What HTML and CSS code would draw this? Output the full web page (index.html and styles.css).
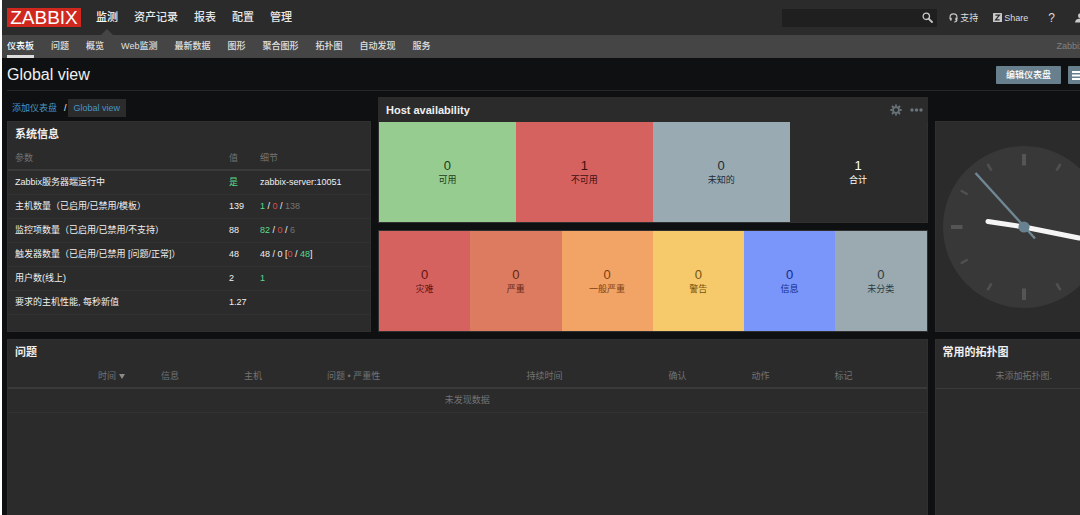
FILE: index.html
```html
<!DOCTYPE html>
<html lang="zh-CN">
<head>
<meta charset="utf-8">
<title>Global view</title>
<link rel="stylesheet" href="styles.css">
</head>
<body>
<div class="page">
  <header class="top-bar">
    <a class="logo" href="#">ZABBIX</a>
    <nav class="main-nav">
      <a class="current" href="#">监测</a>
      <a href="#">资产记录</a>
      <a href="#">报表</a>
      <a href="#">配置</a>
      <a href="#">管理</a>
    </nav>
    <form class="search">
      <input type="text" aria-label="搜索">
      <button type="button" aria-label="搜索">
        <svg width="11" height="11" viewBox="0 0 11 11" fill="none" stroke="#c8c8c8"><circle cx="4.3" cy="4.3" r="3.2" stroke-width="1.3"/><path d="M6.8 6.8 10 10" stroke-width="1.8" stroke-linecap="round"/></svg>
      </button>
    </form>
    <div class="user-links">
      <a class="support" href="#"><svg width="9" height="10" viewBox="0 0 9 10" fill="none" stroke="#c8c8c8"><path d="M1 6V4.4a3.5 3.5 0 0 1 7 0V6M8 6.6c0 1.6-1 2.4-2.8 2.4" stroke-width="1.1"/><path d="M1.8 4.8v2.6M7.2 4.8v2.6" stroke-width="1.8"/></svg>支持</a>
      <a class="share" href="#"><svg width="9" height="9" viewBox="0 0 9 9"><rect width="9" height="9" rx="0.5" fill="#c8c8c8"/><path d="M2.4 2.2h4L2.6 6.8h4" fill="none" stroke="#2b2b2b" stroke-width="1.2"/></svg>Share</a>
      <a class="help" href="#">?</a>
      <a href="#" aria-label="用户"><svg width="11" height="10" viewBox="0 0 11 10" fill="#c8c8c8"><circle cx="5.5" cy="2.7" r="2.5"/><path d="M0 9.5C0 7 2 6 4 5.7h3C9 6 11 7 11 9.5z"/></svg></a>
      <a href="#" aria-label="退出"><svg width="10" height="10" viewBox="0 0 10 10" fill="none" stroke="#c8c8c8" stroke-width="1.3"><path d="M3 2a4 4 0 1 0 4 0M5 0v5"/></svg></a>
    </div>
  </header>
  <nav class="sub-nav">
    <a class="current" href="#">仪表板</a>
    <a href="#">问题</a>
    <a href="#">概览</a>
    <a href="#">Web监测</a>
    <a href="#">最新数据</a>
    <a href="#">图形</a>
    <a href="#">聚合图形</a>
    <a href="#">拓扑图</a>
    <a href="#">自动发现</a>
    <a href="#">服务</a>
    <a class="server-name" href="#">Zabbix docker</a>
  </nav>
  <main class="content">
    <div class="title-bar">
      <h1>Global view</h1>
      <button class="btn" type="button">编辑仪表盘</button>
      <button class="btn btn-icon" type="button" aria-label="菜单"><svg width="11" height="9" viewBox="0 0 11 9" stroke="#fff" stroke-width="1.8"><path d="M0 1h11M0 4.5h11M0 8h11"/></svg></button>
      <button class="btn btn-icon" type="button" aria-label="全屏"><svg width="11" height="9" viewBox="0 0 11 9" fill="none" stroke="#fff" stroke-width="1.4"><path d="M2 3V1h2M7 1h2v2M9 6v2H7M4 8H2V6"/></svg></button>
    </div>
    <div class="breadcrumb">
      <a href="#">添加仪表盘</a><span>/</span><a class="chip" href="#">Global view</a>
    </div>
    <div class="dashboard">
      <section class="widget system">
        <h2>系统信息</h2>
        <table>
          <colgroup><col><col class="col-value"><col class="col-detail"></colgroup>
          <thead><tr><th>参数</th><th>值</th><th>细节</th></tr></thead>
          <tbody>
            <tr><td>Zabbix服务器端运行中</td><td class="green">是</td><td>zabbix-server:10051</td></tr>
            <tr><td>主机数量（已启用/已禁用/模板）</td><td>139</td><td><span class="green">1</span> / <span class="red">0</span> / <span class="grey">138</span></td></tr>
            <tr><td>监控项数量（已启用/已禁用/不支持）</td><td>88</td><td><span class="green">82</span> / <span class="red">0</span> / <span class="grey">6</span></td></tr>
            <tr><td>触发器数量（已启用/已禁用 [问题/正常]）</td><td>48</td><td>48 / 0 [<span class="red">0</span> / <span class="green">48</span>]</td></tr>
            <tr><td>用户数(线上)</td><td>2</td><td class="green">1</td></tr>
            <tr><td>要求的主机性能, 每秒新值</td><td>1.27</td><td></td></tr>
          </tbody>
        </table>
      </section>

      <section class="widget hosts">
        <div class="widget-head">
          <h2>Host availability</h2>
          <button type="button" aria-label="设置"><svg width="12" height="12" viewBox="-6 -6 12 12" fill="none" stroke="#68747a"><circle r="2.9" stroke-width="1.7"/><path d="M0-3.5V-5.6M0 3.5V5.6M-3.5 0H-5.6M3.5 0H5.6M-2.5-2.5-4-4M2.5-2.5 4-4M-2.5 2.5-4 4M2.5 2.5 4 4" stroke-width="1.8"/></svg></button>
          <button type="button" aria-label="更多"><svg width="13" height="4" viewBox="0 0 13 4" fill="#68747a"><circle cx="2" cy="2" r="1.7"/><circle cx="6.5" cy="2" r="1.7"/><circle cx="11" cy="2" r="1.7"/></svg></button>
        </div>
        <div class="tiles">
          <div class="tile available"><b>0</b><span>可用</span></div>
          <div class="tile unavailable"><b>1</b><span>不可用</span></div>
          <div class="tile unknown"><b>0</b><span>未知的</span></div>
          <div class="tile total"><b>1</b><span>合计</span></div>
        </div>
      </section>

      <section class="widget severity">
        <div class="tiles">
          <div class="tile disaster"><b>0</b><span>灾难</span></div>
          <div class="tile high"><b>0</b><span>严重</span></div>
          <div class="tile average"><b>0</b><span>一般严重</span></div>
          <div class="tile warning"><b>0</b><span>警告</span></div>
          <div class="tile info"><b>0</b><span>信息</span></div>
          <div class="tile unclassified"><b>0</b><span>未分类</span></div>
        </div>
      </section>

      <section class="widget clock">
        <svg width="162" height="162" viewBox="-81 -81 162 162">
          <circle r="81" fill="#383838"/>
          <g stroke="#555" stroke-width="4"><path d="M0-73V-61.5M0 73V61.5M-73 0H-61.5M73 0H61.5"/></g>
          <g stroke="#505050" stroke-width="2.6"><path d="M-36.5-63.2-32.5-56.3M-63.2-36.5-56.3-32.5M36.5-63.2 32.5-56.3M63.2-36.5 56.3-32.5M-36.5 63.2-32.5 56.3M-63.2 36.5-56.3 32.5M36.5 63.2 32.5 56.3M63.2 36.5 56.3 32.5"/></g>
          <g stroke="#f5f5f5" stroke-width="5" stroke-linecap="round"><path d="M0 0-36-5.5M0 0 55 11"/></g>
          <path d="M-48.5-54 11 11.5" stroke="#708794" stroke-width="2.4"/>
          <circle r="5.6" fill="#688190"/>
        </svg>
      </section>

      <section class="widget problems">
        <h2>问题</h2>
        <table>
          <colgroup><col class="col-time"><col class="col-short"><col class="col-short"><col><col class="col-duration"><col class="col-short"><col class="col-short"><col class="col-tags"></colgroup>
          <thead><tr><th class="time">时间 <svg width="6" height="5" viewBox="0 0 6 5"><path d="M0 0h6L3 5z" fill="#8a8a8a"/></svg></th><th>信息</th><th>主机</th><th>问题 • 严重性</th><th>持续时间</th><th>确认</th><th>动作</th><th>标记</th></tr></thead>
          <tbody><tr><td class="empty" colspan="8">未发现数据</td></tr></tbody>
        </table>
      </section>

      <section class="widget maps">
        <h2>常用的拓扑图</h2>
        <p>未添加拓扑图.</p>
      </section>
    </div>
  </main>
</div>
</body>
</html>
```
FILE: styles.css
```css
* { box-sizing: border-box; }

html { height: 100%; }

body {
  height: 100%;
  margin: 0;
  overflow: hidden;
  border-left: 2px solid #fff;
  background: #0e1012;
  color: #f0f0f0;
  font: 9px/12px "Liberation Sans", "Noto Sans CJK SC", sans-serif;
}

a { color: inherit; text-decoration: none; }
h1, h2, p { margin: 0; }
svg { display: block; }
button { border: 0; padding: 0; background: none; font: inherit; color: inherit; }

/* The working area is slightly wider than the window */
.page {
  display: flex;
  flex-direction: column;
  width: calc(100% + 40px);
  min-height: 100%;
}

.top-bar {
  display: flex;
  align-items: center;
  height: 35px;
  padding: 0 7px 0 5px;
  background: #2b2b2b;
}

.logo {
  width: 74px;
  background: #d0281f;
  color: #fff;
  font-size: 19px;
  line-height: 19px;
  text-align: center;
}

.main-nav {
  display: flex;
  gap: 16px;
  margin-left: 15px;
  color: #e8e8e8;
  font-size: 11px;
  font-weight: 500;
  line-height: 35px;
}

.main-nav .current { position: relative; color: #fff; }

.main-nav .current::after {
  content: "";
  position: absolute;
  bottom: 0;
  left: 50%;
  margin-left: -6px;
  border: 6px solid transparent;
  border-top: 0;
  border-bottom-color: #454545;
}

.search {
  display: flex;
  align-items: center;
  width: 155px;
  height: 18px;
  margin-left: auto;
  padding-right: 4px;
  background: #1f1f1f;
}

.search input {
  flex: 1;
  min-width: 0;
  height: 100%;
  border: 0;
  background: none;
  color: #f0f0f0;
  font: inherit;
}

.user-links {
  display: flex;
  align-items: center;
  margin-left: 12px;
  color: #ddd;
}

.user-links a { display: flex; align-items: center; gap: 2px; margin-right: 15px; }
.user-links .share { margin-right: 20px; }
.user-links .help { margin-right: 20px; font-size: 12px; }
.user-links a:last-child { margin: 0 2px 0 0; }

.sub-nav {
  display: flex;
  gap: 17px;
  height: 23px;
  padding: 0 7px 0 5px;
  background: #454545;
  color: #e0e0e0;
  font-weight: 500;
  line-height: 23px;
}

.sub-nav .current { border-bottom: 3px solid #ddd; color: #fff; }
.sub-nav .server-name { margin-left: auto; color: #808080; font-weight: 400; }

.content {
  display: flex;
  flex: 1;
  flex-direction: column;
  padding: 0 7px 0 5px;
}

.title-bar {
  display: flex;
  align-items: center;
  gap: 7px;
  height: 33px;
  padding-top: 2px;
  border-bottom: 1px solid #252729;
}

.title-bar h1 { flex: 1; font-size: 16px; font-weight: 400; line-height: 20px; }

.btn {
  height: 18px;
  padding: 0 10px;
  border-radius: 1px;
  background: #68808e;
  color: #fff;
  font-weight: 500;
}

.btn-icon { padding: 0 4px; }

.breadcrumb {
  display: flex;
  align-items: center;
  height: 30px;
  padding: 3px 5px 0;
  color: #f0f0f0;
}

.breadcrumb a { color: #4796c4; }
.breadcrumb span { margin: 0 1px 0 7px; }
.breadcrumb .chip { padding: 3px 6px; background: #2b2b2b; line-height: 12px; }

.dashboard {
  display: grid;
  flex: 1;
  grid-template-columns: repeat(12, 1fr);
  grid-template-rows: 102px 102px minmax(176px, 1fr);
  gap: 7px;
}

.widget {
  position: relative;
  min-width: 0;
  border: 1px solid #303030;
  background: #2b2b2b;
}

.system { grid-column: span 4; grid-row: span 2; }
.hosts { grid-column: 5 / span 6; grid-row: 1; }
.severity { grid-column: 5 / span 6; grid-row: 2; }
.clock { display: grid; grid-column: 11 / span 2; grid-row: 1 / span 2; place-items: center; }
.problems { grid-column: 1 / span 10; border-bottom: 0; }
.maps { grid-column: 11 / span 2; border-bottom: 0; }

.widget h2 { padding-left: 7px; font-size: 11px; line-height: 24px; }

/* Header revealed above the widget while it is active */
.widget-head {
  position: absolute;
  right: -1px;
  bottom: 100%;
  left: -1px;
  display: flex;
  align-items: center;
  gap: 8px;
  height: 25px;
  padding: 0 5px 0 1px;
  background: #2b2b2b;
}

.widget-head h2 { flex: 1; }

table { width: 100%; border-collapse: collapse; table-layout: fixed; }
th, td { height: 24px; padding: 0 0 0 7px; text-align: left; white-space: nowrap; }
th { border-bottom: 2px solid #3a3a3a; color: #737373; font-weight: 400; }
td { border-bottom: 1px solid #323232; }

.col-value { width: 31px; }
.col-detail { width: 117px; }
.col-time { width: 146px; }
.col-short { width: 83px; }
.col-duration { width: 142px; }
.col-tags { width: 99px; }

.time { padding-left: 90px; }
.time svg { display: inline-block; }
td.empty { padding: 0; color: #737373; text-align: center; }

.green { color: #59db8f; }
.red { color: #d64e4e; }
.grey { color: #737373; }

.tiles { display: flex; height: 100%; }

.tile {
  display: flex;
  flex: 1;
  flex-direction: column;
  align-items: center;
  justify-content: center;
}

.tile b { font-size: 13px; font-weight: 400; line-height: 16px; }

.available { background: #97cc90; color: #1d3a1a; }
.unavailable { background: #d6625f; color: #3d1010; }
.unknown { background: #9aaab3; color: #1f2c33; }
.total { color: #fff; }
.disaster { background: #d6625f; color: #5e1414; }
.high { background: #dc7b60; color: #6a2412; }
.average { background: #f2a366; color: #7a4212; }
.warning { background: #f6ca6b; color: #735410; }
.info { background: #7b96fa; color: #152a84; }
.unclassified { background: #9aaab0; color: #2c3b42; }

.maps p {
  border-bottom: 1px solid #3a3a3a;
  color: #737373;
  line-height: 24px;
  text-align: center;
}
```
